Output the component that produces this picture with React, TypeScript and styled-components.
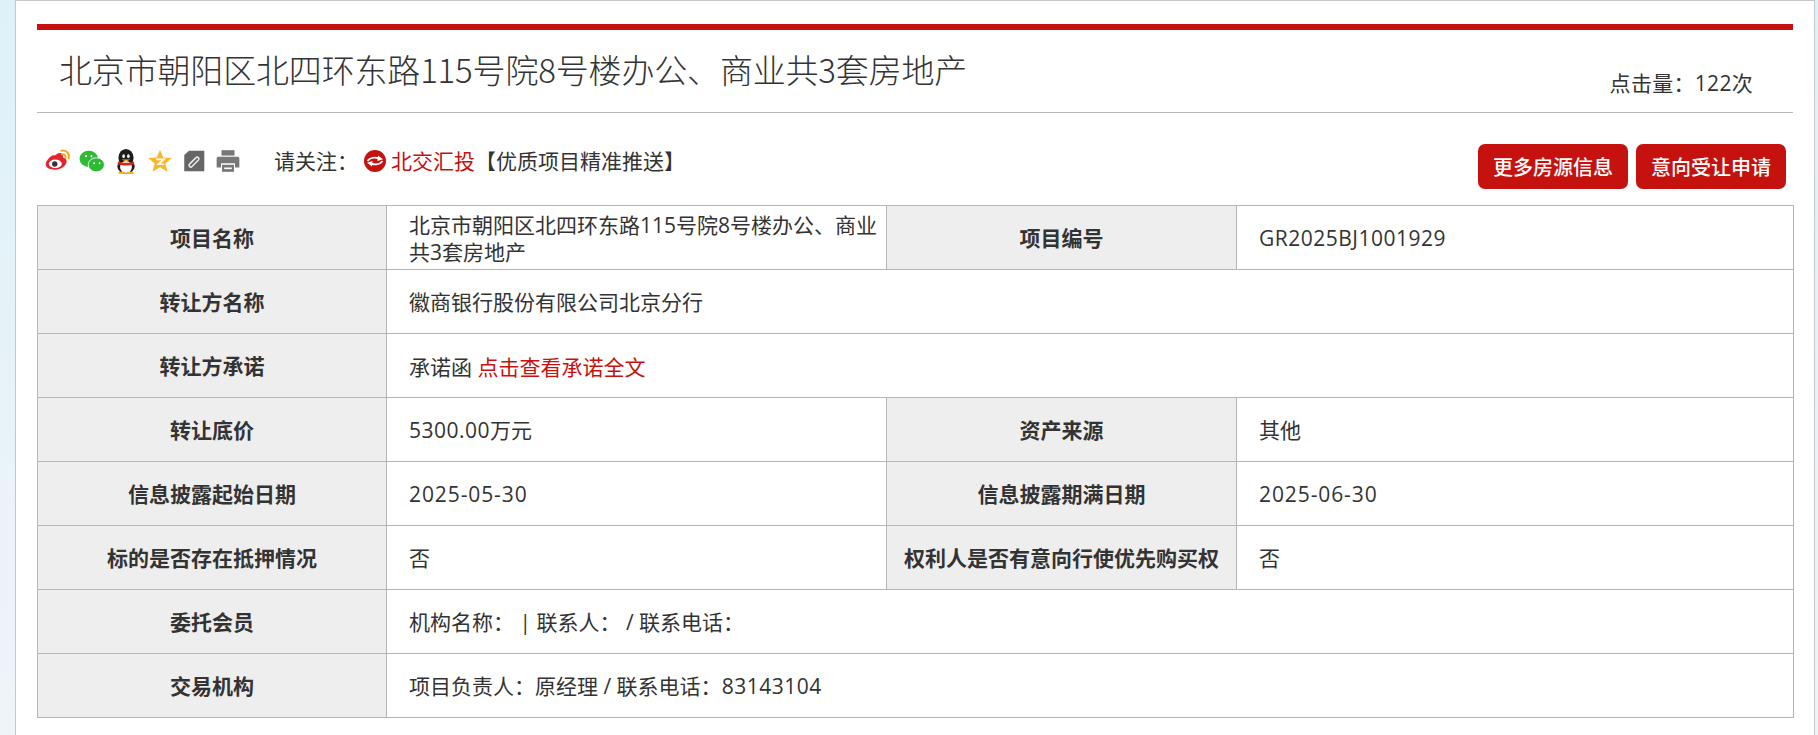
import React, { FC } from "react";
import styled, { createGlobalStyle } from "styled-components";

const GlobalStyle = createGlobalStyle`
  html, body {
    margin: 0;
    padding: 0;
    height: 735px;
    overflow: hidden;
    background: linear-gradient(180deg, #def1f9 0%, #eff4f8 100%);
    font-family: "Open Sans", "Noto Sans CJK SC", sans-serif;
    color: #333;
  }
`;

const Panel = styled.div`
  box-sizing: border-box;
  margin-left: 15px;
  width: 1800px;
  height: 735px;
  padding: 23px 21px 0 21px;
  background: #fff;
  border: 1px solid #c4c8cc;
  border-bottom: none;
`;

const TitleBar = styled.div`
  box-sizing: border-box;
  height: 89px;
  display: flex;
  justify-content: space-between;
  border-top: 6px solid #c5120f;
  border-bottom: 1px solid #b9b9b9;
`;

const Title = styled.h1`
  margin: 0;
  padding: 16px 0 0 22px;
  font-family: "Noto Sans CJK SC", sans-serif;
  font-size: 33px;
  line-height: 46px;
  font-weight: 300;
  letter-spacing: -0.17px;
  color: #333;
`;

const Clicks = styled.span`
  margin: 39px 40px 0 0;
  font-size: 21px;
  line-height: 28px;
  letter-spacing: 0.3px;
`;

const ToolBar = styled.div`
  height: 92px;
  display: flex;
  justify-content: space-between;
  align-items: flex-start;
`;

const ShareArea = styled.div`
  display: flex;
  align-items: center;
  padding: 34px 0 0 8px;
`;

const ShareIcons = styled.div`
  display: flex;
  align-items: center;
  gap: 8px;
  width: 229px;
`;

const ShareIcon = styled.svg`
  width: 26px;
  height: 26px;
  display: block;
`;

const FollowText = styled.span`
  font-size: 21px;
  line-height: 28px;
`;

const FollowLogo = styled.svg`
  width: 22px;
  height: 22px;
  margin: 0 5px 0 6px;
  display: block;
`;

const RedLink = styled.a`
  color: #c5120f;
  font-size: 21px;
  line-height: 28px;
`;

const Buttons = styled.div`
  display: flex;
  gap: 8px;
  padding: 31px 7px 0 0;
`;

const ActionButton = styled.button`
  box-sizing: border-box;
  width: 150px;
  height: 45px;
  padding: 0;
  border: none;
  border-radius: 7px;
  background: #c5120f;
  color: #fff;
  font-family: inherit;
  font-size: 20px;
  font-weight: 500;
  cursor: pointer;
`;

const InfoTable = styled.table`
  box-sizing: border-box;
  width: 1756px;
  table-layout: fixed;
  border-collapse: collapse;
  font-size: 21px;
`;

const HeadCell = styled.th`
  height: 62px;
  padding: 1px 10px 0;
  background: #eee;
  border: 1px solid #b5b5b5;
  font-weight: 700;
  font-size: 21px;
  line-height: 27px;
  text-align: center;
  color: #333;
`;

const ValueCell = styled.td`
  height: 61px;
  padding: 2px 4px 0 22px;
  border: 1px solid #b5b5b5;
  line-height: 27px;
  color: #333;
`;

const Num = styled.span<{ $spacing?: number }>`
  letter-spacing: ${(p) => p.$spacing ?? 0.5}px;
`;

const icons = [
  <ShareIcon key="weibo" viewBox="0 0 24 24">
    <path d="M9 7c3.500-3 7-3 7.500-.5.2 1.200-.3 2.200.4 2.400 3.500.8 4 4 1.600 7-2.800 3.400-8 5-12.500 3.800C2 19 0 16.500.8 13.800 1.600 11.500 6 5.500 9 7z" fill="#e6232c" />
    <ellipse cx="9.500" cy="14.500" rx="6" ry="4" fill="#fff" />
    <circle cx="9" cy="14.700" r="2.500" fill="#333" />
    <path d="M15 2.500c4.500-1 8 2.500 7 7M15.500 5.800c2.300-.5 4 1.200 3.500 3.500" fill="none" stroke="#f5a623" strokeWidth="1.700" strokeLinecap="round" />
  </ShareIcon>,
  <ShareIcon key="wechat" viewBox="0 0 24 24">
    <ellipse cx="9" cy="10" rx="8.500" ry="7.500" fill="#2dbb34" />
    <ellipse cx="16" cy="15.500" rx="7.500" ry="6.500" fill="#2dbb34" stroke="#fff" strokeWidth=".8" />
    <circle cx="6.500" cy="7.500" r="1" fill="#fff" />
    <circle cx="11.500" cy="7.500" r="1" fill="#fff" />
    <circle cx="14" cy="14" r=".9" fill="#fff" />
    <circle cx="19" cy="14" r=".9" fill="#fff" />
  </ShareIcon>,
  <ShareIcon key="qq" viewBox="0 0 24 24">
    <ellipse cx="12" cy="9" rx="7" ry="8" fill="#1c1c1c" />
    <ellipse cx="12" cy="17" rx="8" ry="6.500" fill="#1c1c1c" />
    <ellipse cx="12" cy="17.500" rx="5.500" ry="5.500" fill="#fff" />
    <ellipse cx="9.800" cy="7.500" rx="1.200" ry="1.700" fill="#fff" />
    <ellipse cx="14.200" cy="7.500" rx="1.200" ry="1.700" fill="#fff" />
    <path d="M8 10.500h8l-4 2z" fill="#f5b21a" />
    <path d="M4.500 12.500c4 1.500 11 1.500 15 0v2.500c-4 1.500-11 1.500-15 0z" fill="#d9261c" />
    <path d="M6 23h4.500M13.500 23H18" stroke="#f5b21a" strokeWidth="2" strokeLinecap="round" />
  </ShareIcon>,
  <ShareIcon key="qzone" viewBox="0 0 24 24">
    <path d="M12 1.500l3 7.200 8 .6-6.100 5 2 7.700L12 17.800 5.100 22l2-7.700L1 9.300l8-.6z" fill="#f9b62c" />
    <path d="M8.500 10.500h7l-5 4.500h5" fill="none" stroke="#fff" strokeWidth="1.600" />
  </ShareIcon>,
  <ShareIcon key="link" viewBox="0 0 24 24">
    <path d="M3 6.500L7.500 2.500h14V21.500H3z" fill="#666" />
    <path d="M9 16l6-6" stroke="#eee" strokeWidth="4.500" strokeLinecap="round" />
    <path d="M9 16l6-6" stroke="#666" strokeWidth="1.800" strokeLinecap="round" />
  </ShareIcon>,
  <ShareIcon key="print" viewBox="0 0 24 24">
    <path d="M6 2h12v5H6z" fill="#777" />
    <path d="M1.500 9.500Q1.500 8 3 8h18q1.500 0 1.500 1.500V18h-4v-4h-13v4h-4z" fill="#777" />
    <path d="M6.500 15.500h11V22h-11z" fill="#777" />
    <path d="M8.500 18h7v1.500h-7z" fill="#fff" />
  </ShareIcon>,
];

const App: FC = () => {
  return (
    <Panel>
      <GlobalStyle />
      <TitleBar>
        <Title>北京市朝阳区北四环东路115号院8号楼办公、商业共3套房地产</Title>
        <Clicks>点击量：122次</Clicks>
      </TitleBar>
      <ToolBar>
        <ShareArea>
          <ShareIcons>{icons}</ShareIcons>
          <FollowText>请关注：</FollowText>
          <FollowLogo viewBox="0 0 22 22">
            <circle cx="11" cy="11" r="11" fill="#c5120f" />
            <path d="M3.500 11C6 7.500 11 7 15 8.500" fill="none" stroke="#fff" strokeWidth="2" />
            <path d="M14 5.500l5 3.800-5.500 1.700z" fill="#fff" />
            <path d="M18.500 11C16 14.500 11 15 7 13.500" fill="none" stroke="#fff" strokeWidth="2" />
            <path d="M8 16.500L3 12.700 8.500 11z" fill="#fff" />
          </FollowLogo>
          <RedLink>北交汇投</RedLink>
          <FollowText>【优质项目精准推送】</FollowText>
        </ShareArea>
        <Buttons>
          <ActionButton>更多房源信息</ActionButton>
          <ActionButton>意向受让申请</ActionButton>
        </Buttons>
      </ToolBar>
      <InfoTable>
        <colgroup>
          <col width="349" />
          <col width="500" />
          <col width="350" />
          <col width="557" />
        </colgroup>
        <tbody>
          <tr>
            <HeadCell>项目名称</HeadCell>
            <ValueCell>北京市朝阳区北四环东路115号院8号楼办公、商业共3套房地产</ValueCell>
            <HeadCell>项目编号</HeadCell>
            <ValueCell>
              <Num>GR2025BJ1001929</Num>
            </ValueCell>
          </tr>
          <tr>
            <HeadCell>转让方名称</HeadCell>
            <ValueCell colSpan={3}>徽商银行股份有限公司北京分行</ValueCell>
          </tr>
          <tr>
            <HeadCell>转让方承诺</HeadCell>
            <ValueCell colSpan={3}>
              承诺函 <RedLink>点击查看承诺全文</RedLink>
            </ValueCell>
          </tr>
          <tr>
            <HeadCell>转让底价</HeadCell>
            <ValueCell>
              <Num>5300.00</Num>万元
            </ValueCell>
            <HeadCell>资产来源</HeadCell>
            <ValueCell>其他</ValueCell>
          </tr>
          <tr>
            <HeadCell>信息披露起始日期</HeadCell>
            <ValueCell>
              <Num $spacing={0.9}>2025-05-30</Num>
            </ValueCell>
            <HeadCell>信息披露期满日期</HeadCell>
            <ValueCell>
              <Num $spacing={0.9}>2025-06-30</Num>
            </ValueCell>
          </tr>
          <tr>
            <HeadCell>标的是否存在抵押情况</HeadCell>
            <ValueCell>否</ValueCell>
            <HeadCell>权利人是否有意向行使优先购买权</HeadCell>
            <ValueCell>否</ValueCell>
          </tr>
          <tr>
            <HeadCell>委托会员</HeadCell>
            <ValueCell colSpan={3}>机构名称： | 联系人： / 联系电话：</ValueCell>
          </tr>
          <tr>
            <HeadCell>交易机构</HeadCell>
            <ValueCell colSpan={3}>
              项目负责人：原经理 / 联系电话：<Num>83143104</Num>
            </ValueCell>
          </tr>
        </tbody>
      </InfoTable>
    </Panel>
  );
};

export default App;
